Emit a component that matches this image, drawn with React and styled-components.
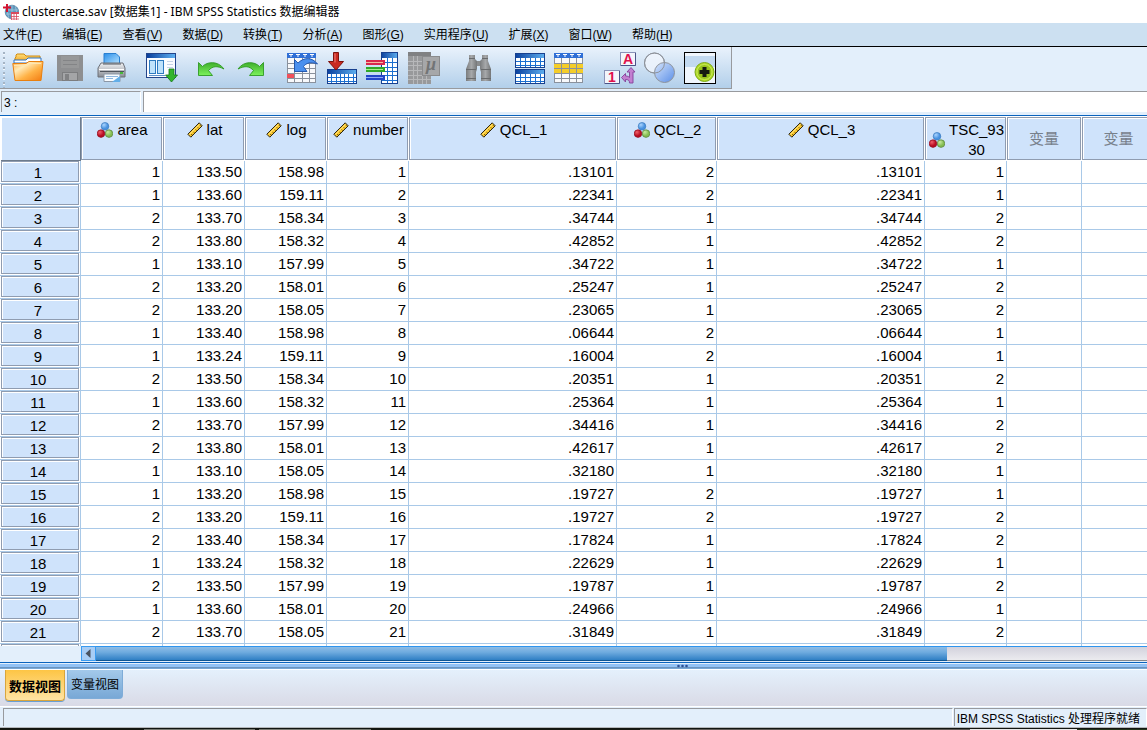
import React from "react";
import styled, { createGlobalStyle, css } from "styled-components";

const SANS = `"Liberation Sans", "Noto Sans CJK SC", sans-serif`;
const C = {
  pale: "#e3effb",
  menu: "#cce0f1",
  head: "#cfe3fb",
  edge: "#8f9cb0",
  grid: "#a9c9e8",
  grey: "#989a9e",
};

const Global = createGlobalStyle`
  *, *::before, *::after { box-sizing: border-box; }
  body { margin: 0; background: ${C.pale}; font-family: ${SANS}; font-size: 12px; color: #000; }
  button, input { font: inherit; color: inherit; margin: 0; border-radius: 0; }
`;

const Window = styled.div`
  display: flex;
  flex-direction: column;
  height: 100vh;
  overflow: hidden;
`;

const TitleBar = styled.header`
  display: flex;
  align-items: center;
  flex: none;
  height: 23px;
  padding-left: 3px;
  gap: 3px;
  background: #fff;
`;

const Title = styled.h1`
  margin: 0;
  font: 400 12px/20px "Noto Sans", "Noto Sans CJK SC", sans-serif;
  white-space: nowrap;
`;

const MenuBar = styled.nav`
  display: flex;
  flex: none;
  gap: 20px;
  height: 24px;
  padding: 1px 3px 0;
  background: ${C.menu};
  border-bottom: 1px solid #000;
`;

const MenuItem = styled.button`
  padding: 0;
  border: 0;
  background: none;
  line-height: 22px;
  white-space: nowrap;
`;

const ToolBand = styled.div`
  display: flex;
  flex: none;
  height: 44px;
`;

const Toolbar = styled.div`
  display: flex;
  height: 42px;
  padding: 5px 14px 0 3px;
  background: linear-gradient(#e9f2fc, #b2cfea);
  border-right: 1px solid ${C.grey};
  border-bottom: 1px solid ${C.grey};
`;

const Grip = styled.span`
  width: 2px;
  height: 36px;
  margin-right: 7px;
  background: repeating-linear-gradient(#a5b4c4 0 2px, #f4f9ff 2px 3px, transparent 3px 5px);
`;

const ToolGroup = styled.div`
  display: flex;
  gap: ${(p) => p.$gap || 8}px;
  margin-left: ${(p) => p.$lead || 0}px;
`;

const ToolButton = styled.button`
  width: 32px;
  height: 32px;
  padding: 0;
  border: 0;
  background: none;
  svg { display: block; overflow: visible; }
`;

const EntryBar = styled.div`
  display: flex;
  flex: none;
  gap: 2px;
  height: 25px;
  padding: 0 0 3px 1px;
  border-bottom: 1px solid #0a63bd;
`;

const CellName = styled.input`
  width: 140px;
  padding: 2px 2px 0;
  border: 0;
  border-left: 1px solid ${C.grey};
  border-top: 1px solid ${C.grey};
  border-right: 1px solid #fff;
  background: #e1effc;
`;

const CellValue = styled.input`
  flex: 1;
  min-width: 0;
  border: 0;
  border-left: 1px solid ${C.grey};
  border-top: 1px solid ${C.grey};
  background: #fff;
`;

const Sheet = styled.main`
  flex: 1;
  min-height: 0;
  overflow: hidden;
  background: #fff;
`;

const Table = styled.table`
  table-layout: fixed;
  width: 100%;
  min-width: 1156px;
  border-spacing: 0;
  font-size: 15px;
  th, td { padding: 0; font-weight: 400; }
`;

const raised = css`
  background: ${C.head};
  border: 1px solid ${C.edge};
  box-shadow: inset 1px 1px #fff;
`;

const HeadBox = styled.div`
  ${raised}
  display: flex;
  justify-content: center;
  align-items: ${(p) => (p.$empty ? "center" : "flex-start")};
  height: 43px;
  margin: 1px 1px 1px 0;
  padding: ${(p) => (p.$empty ? "0" : "2px 0 0 2px")};
  color: ${(p) => (p.$empty ? "#77808b" : "#000")};
  line-height: 20px;
  overflow: hidden;
`;

const CornerBox = styled.div`
  height: 44px;
  margin: 1px 0 0 1px;
  background: ${C.head};
  border-right: 1px solid #6d7b8c;
  border-bottom: 1px solid #6d7b8c;
  box-shadow: inset 1px 1px #fff;
`;

const HeadLabel = styled.span`
  display: flex;
  align-items: center;
  gap: 4px;
  svg { flex: none; }
`;

const RowBox = styled.div`
  ${raised}
  height: 21px;
  margin: 0 1px 1px;
  padding-right: 4px;
  line-height: 21px;
  text-align: center;
`;

const RowHead = styled.th`
  border-right: 1px solid ${C.grid};
  border-bottom: 1px solid ${C.grid};
`;

const Cell = styled.td`
  height: 23px;
  border-right: 1px solid ${C.grid};
  border-bottom: 1px solid ${C.grid};
  && { padding-right: 2px; }
  line-height: 20px;
  text-align: right;
`;

const ScrollRow = styled.div`
  display: flex;
  flex: none;
  height: 17px;
  padding: 0 0 1px 81px;
  border-bottom: 1px solid #0a63bd;
`;

const ScrollButton = styled.button`
  flex: none;
  width: 15px;
  padding: 0 0 0 3px;
  border: 1px solid #3a9bf0;
  background: #a8cdf5;
  svg { display: block; }
`;

const ScrollTrack = styled.div`
  flex: 1;
  border-top: 1px solid #2f95ee;
  border-bottom: 1px solid #86898f;
  background: linear-gradient(#d3d2dd, #ebebef);
`;

const ScrollThumb = styled.div`
  width: 81%;
  height: 14px;
  border-bottom: 1px solid #0f5592;
  background: linear-gradient(#8ebde6, #6fabdf 40%, #2f7fc4);
`;

const Splitter = styled.div`
  flex: none;
  height: 7px;
  padding-left: 59%;
  background: linear-gradient(#e3effb 0 1px, #92c2f5 1px 4px, #6b93bd 4px 5px, #78a9d8 5px 6px, #fff 6px);
  svg { display: block; }
`;

const TabBar = styled.div`
  display: flex;
  flex: none;
  align-items: flex-start;
  gap: 2px;
  height: 36px;
  padding-left: 5px;
  background: linear-gradient(#e4f0fc, #d9dae6);
`;

const Tab = styled.button`
  height: ${(p) => (p.$active ? 31 : 29)}px;
  padding: ${(p) => (p.$active ? "0 3px" : "0 3px 2px")};
  border: 1px solid ${(p) => (p.$active ? "#d9a53c" : "#7eacd8")};
  border-top-width: 0;
  border-radius: 0 0 4px 4px;
  background: ${(p) => (p.$active ? "linear-gradient(#fdc545, #ffe3a3)" : "linear-gradient(#a3c9ea, #78a8d6)")};
  box-shadow: ${(p) => (p.$active ? "0 1px #6b9fd3" : "none")};
  font-size: ${(p) => (p.$active ? 13 : 12)}px;
  font-weight: ${(p) => (p.$active ? 700 : 400)};
  white-space: nowrap;
`;

const StatusBar = styled.footer`
  display: flex;
  flex: none;
  gap: 1px;
  height: 22px;
  padding: 1px 0 1px 3px;
  border-top: 1px solid #fff;
  border-bottom: 1px solid #b4b7ba;
`;

const StatusPane = styled.div`
  flex: ${(p) => (p.$grow ? 1 : "none")};
  padding: 0 6px 0 2px;
  border-left: 1px solid ${C.grey};
  border-top: 1px solid ${C.grey};
  border-right: 1px solid #fff;
  line-height: 20px;
  white-space: nowrap;
`;

const Desktop = styled.div`
  flex: none;
  height: 2px;
  border-top: 1px solid #101410;
  background: linear-gradient(90deg, #15170f 0 144px, #77786f 144px 255px, #15170f 255px 259px, #77786f 259px 371px, #15170f 371px 640px, #5d5752 640px 970px, #e8e8e8 970px 1077px, #23341a 1077px);
`;

/* ---------- drawings ---------- */

const lines = (x, y, w, h, cols, rows, color, sw = 1) => {
  let d = "";
  for (let i = 1; i < cols; i++) d += `M${Math.round(x + (w * i) / cols) + 0.5} ${y}v${h}`;
  for (let i = 1; i < rows; i++) d += `M${x} ${Math.round(y + (h * i) / rows) + 0.5}h${w}`;
  return <path d={d} stroke={color} strokeWidth={sw} fill="none" />;
};

const Svg = ({ size = 32, children }) => (
  <svg width={size} height={size} viewBox={`0 0 ${size} ${size}`} aria-hidden="true">{children}</svg>
);

const DefsSvg = styled.svg`
  display: block;
  flex: none;
`;

const Defs = () => (
  <DefsSvg width="0" height="0" aria-hidden="true">
    <defs>
      <linearGradient id="orange" x1="0" y1="0" x2="1" y2="1"><stop offset="0" stopColor="#ffb04a" /><stop offset=".3" stopColor="#ffeab8" /><stop offset=".6" stopColor="#ffb347" /><stop offset="1" stopColor="#f27a10" /></linearGradient>
      <linearGradient id="amber" x1="0" y1="0" x2="0" y2="1"><stop offset="0" stopColor="#ffe07a" /><stop offset="1" stopColor="#f0a020" /></linearGradient>
      <linearGradient id="blueHead"><stop offset="0" stopColor="#0a3f9c" /><stop offset="1" stopColor="#5fb0f0" /></linearGradient>
      <linearGradient id="sky" x1="0" y1="0" x2="1" y2="1"><stop offset="0" stopColor="#2a8fea" /><stop offset="1" stopColor="#b5e2ff" /></linearGradient>
      <linearGradient id="grass" x1="0" y1="0" x2="0" y2="1"><stop offset="0" stopColor="#3fae2c" /><stop offset="1" stopColor="#7cf25c" /></linearGradient>
      <linearGradient id="metal" x1="0" y1="0" x2="0" y2="1"><stop offset="0" stopColor="#f2f3f5" /><stop offset="1" stopColor="#888c94" /></linearGradient>
      <linearGradient id="lens" x1="0" y1="0" x2="1" y2="1"><stop offset="0" stopColor="#d5e4fb" /><stop offset="1" stopColor="#5b8fe8" /></linearGradient>
      <linearGradient id="barrel"><stop offset="0" stopColor="#7a7c7e" /><stop offset=".5" stopColor="#a6a8aa" /><stop offset="1" stopColor="#747678" /></linearGradient>
      <radialGradient id="rBlue" cx=".35" cy=".3"><stop offset="0" stopColor="#a9d4ff" /><stop offset="1" stopColor="#4a93e0" /></radialGradient>
      <radialGradient id="rRed" cx=".35" cy=".3"><stop offset="0" stopColor="#f0606a" /><stop offset="1" stopColor="#b80d22" /></radialGradient>
      <radialGradient id="rGreen" cx=".35" cy=".3"><stop offset="0" stopColor="#c8eaa0" /><stop offset="1" stopColor="#84bd52" /></radialGradient>
    </defs>
  </DefsSvg>
);

const Nominal = () => (
  <Svg size={16}>
    <circle cx="8" cy="4.300" r="3.800" fill="url(#rBlue)" stroke="#3878bd" strokeWidth=".7" />
    <circle cx="12" cy="11.600" r="3.800" fill="url(#rGreen)" stroke="#55803a" strokeWidth=".7" />
    <circle cx="4" cy="11.600" r="3.800" fill="url(#rRed)" stroke="#8f0c1c" strokeWidth=".7" />
  </Svg>
);

const Scale = () => (
  <Svg size={16}>
    <path d="M.8 12.200 12.200.8 15.200 3.800 3.800 15.200Z" fill="#fbc92e" stroke="#2b2410" strokeWidth="1" />
    <path d="M4.200 12l1 1M6.400 9.800l1 1M8.600 7.600l1 1M10.800 5.400l1 1M13 3.200l1 1" stroke="#5a4608" strokeWidth=".9" />
    <path d="M2.400 12.400 12.200 2.600" stroke="#ffeb9a" strokeWidth=".8" />
  </Svg>
);

const AppIcon = () => (
  <Svg size={16}>
    <circle cx="9" cy="8" r="6.800" fill="#5f97bd" stroke="#3f6f94" strokeWidth=".6" />
    <path d="M3 6h12M3 10h12M9 1.200v13.600M5.500 2.500q-2 5.500 0 11M12.500 2.500q2 5.500 0 11" stroke="#b9d7e8" strokeWidth=".6" fill="none" />
    <path d="M4 0v8M0 3.500h8" stroke="#d3122e" strokeWidth="2" />
    <rect x="8" y="8" width="8" height="8" fill="#fff" />
    <rect x="8" y="8" width="8" height="2" fill="#d84a5e" />
    <path d="M8.500 10v6M11 10v6M13.500 10v6M8 12.500h8M8 15h8" stroke="#d84a5e" strokeWidth=".8" />
  </Svg>
);

const Folder = () => (
  <Svg>
    <path d="M3 10V6l1-1V3l1-1h7l2 2h14v6Z" fill="url(#amber)" stroke="#d08a10" />
    <path d="M2 11V8h12l2-2h13v5Z" fill="#fff" stroke="#2f74c4" />
    <path d="M.8 11.500H14L17 9.500H31L29 28.500H3Z" fill="url(#orange)" stroke="#e8800f" />
    <path d="M2 13.500h13l3-2h11" stroke="#ffe6b0" fill="none" />
  </Svg>
);

const Save = () => (
  <Svg>
    <rect x="4" y="3" width="26" height="26" fill="#8e8f91" />
    <rect x="8" y="4" width="18" height="12" fill="#979899" />
    <path d="M10 8.500h14M10 12.500h14" stroke="#838486" />
    <rect x="9.500" y="20.500" width="15" height="8" fill="#a4a5a7" stroke="#7c7d7f" />
    <rect x="12" y="22" width="4" height="7" fill="#808183" />
  </Svg>
);

const Printer = () => (
  <Svg>
    <path d="M10 1.500H22L25.500 5V12H10Z" fill="url(#sky)" stroke="#2a7fd0" />
    <path d="M7 11h22l2 5v9H4v-9Z" fill="url(#metal)" stroke="#6c7078" />
    <path d="M9 12h18M6 19.500h24" stroke="#4f545c" />
    <path d="M5 17.500h25" stroke="#fff" />
    <rect x="26" y="20" width="3" height="2" fill="#48b83c" />
    <path d="M10 22H26V29.500H10Z" fill="#f7fbff" stroke="#8b97a6" />
    <path d="M12 24.500h12M12 26.500h7" stroke="#8fb6dd" />
    <path d="M26 24l-8 6h8Z" fill="#62aee8" />
  </Svg>
);

const DialogRecall = () => (
  <Svg>
    <rect x="1.500" y="1.500" width="29" height="24" fill="#fbfcff" stroke="#23448a" />
    <rect x="2" y="2" width="28" height="4" fill="url(#blueHead)" />
    <rect x="4.500" y="8.500" width="6" height="13" fill="#bfe2fb" stroke="#2d7ac0" />
    <rect x="12.500" y="8.500" width="6" height="13" fill="#bfe2fb" stroke="#2d7ac0" />
    <path d="M4 23.500h16" stroke="#5a8fc8" />
    <path d="M22 9.500h6M22 12.500h6M22 15.500h6" stroke="#c5d3e6" />
    <path d="M24 17h5v6h3.500L26.500 30 20.500 23H24Z" fill="#33b52c" stroke="#14791a" strokeWidth=".8" />
  </Svg>
);

const undoPath = "M2.500 10.500 6.500 14.500C11 9.500 22 8.500 28 17 21 13.500 16.500 14 12.500 18.500L16.500 23.500H2.500Z";
const Undo = () => (
  <Svg><path d={undoPath} fill="url(#grass)" stroke="#2f9a24" strokeWidth=".9" /></Svg>
);
const Redo = () => (
  <Svg><g transform="translate(30 0) scale(-1 1)"><path d={undoPath} fill="url(#grass)" stroke="#2f9a24" strokeWidth=".9" /></g></Svg>
);

const SheetGrid = ({ children }) => (
  <g>
    <rect x=".5" y="1.500" width="28" height="29" fill="#f8f9fb" stroke="#8a919c" />
    {children}
    {lines(0, 6, 29, 25, 4, 5, "#8a919c")}
    <rect x="0" y="1" width="29" height="5" fill="#2f6fd6" />
    <path d="M2 2.500h4M4 2v3M9 2.500h4M11 2v3M16 2.500h4M18 2v3M23 2.500h4M25 2v3" stroke="#fff" />
  </g>
);

const GoToCase = () => (
  <Svg>
    <SheetGrid><rect x="0" y="21" width="7" height="5" fill="#f0505a" /></SheetGrid>
    <path d="M7.500 7.500 11 11C17 5 25 5 30.500 12 24 9.500 19 11 16.500 14.500L20 19.500H7.500Z" fill="#4a90ee" stroke="#1a4fa8" strokeWidth=".9" />
  </Svg>
);

const BlueTable = ({ x, y, w, h, head, cols, rows }) => (
  <g>
    <rect x={x} y={y} width={w} height={h} fill="#fff" />
    {lines(x, y + head, w, h - head, cols, rows, "#1c6fd0")}
    <rect x={x} y={y} width={w} height={head} fill="url(#blueHead)" />
    <rect x={x + 0.5} y={y + 0.5} width={w - 1} height={h - 1} fill="none" stroke="#17408f" />
  </g>
);

const GoToVariable = () => (
  <Svg>
    <BlueTable x={0} y={17} w={30} h={15} head={5} cols={7} rows={3} />
    <path d="M6.500.5h5v9h5L9 18 1.500 9.500h5Z" fill="#c92a20" stroke="#7e120c" />
    <path d="M8 1.500v9" stroke="#f08078" />
  </Svg>
);

const Variables = () => (
  <Svg>
    <BlueTable x={14} y={0} w={17} h={32} head={6} cols={3} rows={6} />
    {[["#d8284c", "#f5b8a0", 8], ["#30a828", "#a4f08c", 15], ["#2346c8", "#90a8f8", 23]].map(([a, b, y]) => (
      <g key={y}>
        <rect x="-1" y={y} width="19" height="5" fill={a} />
        <path d={`M-1 ${y + 2.5}h17`} stroke={b} />
      </g>
    ))}
  </Svg>
);

const Mu = styled.text`
  font: italic 700 18px "Liberation Serif", serif;
  fill: #727476;
`;

const Statistics = () => (
  <Svg>
    <rect x="1" y="0" width="23" height="32" fill="#98999b" />
    <rect x="1" y="0" width="23" height="4" fill="#808183" />
    {lines(1, 4, 23, 28, 5, 6, "#b7b8ba")}
    <rect x="15.500" y="4.500" width="17" height="19" fill="#a6a7a9" stroke="#8a8b8d" />
    <Mu x="19" y="18">μ</Mu>
  </Svg>
);

const Find = () => (
  <Svg>
    <rect x="12" y="9" width="8" height="5" fill="#8a8c8e" />
    <path d="M6 3h6v4l2 2v8l-1 3v9H3V17l3-8Z" fill="url(#barrel)" />
    <path d="M19 3h6v6l3 8v12H18v-9l-1-3V9l2-2Z" fill="url(#barrel)" />
    <path d="M6 6.500h6M19 6.500h6M3 17.500h10M18 17.500h10M3 26.500h10M18 26.500h10" stroke="#696b6d" />
  </Svg>
);

const SplitFile = () => (
  <Svg>
    <BlueTable x={1} y={1} w={30} h={15} head={5} cols={6} rows={3} />
    <BlueTable x={1} y={17} w={30} h={15} head={5} cols={6} rows={3} />
  </Svg>
);

const SelectCases = () => (
  <Svg><SheetGrid><rect x="0" y="11" width="29" height="10" fill="#f5cd28" /></SheetGrid></Svg>
);

const Glyph = styled.text`
  font: 700 14px "Liberation Sans", sans-serif;
  fill: #e0104c;
  text-anchor: middle;
`;

const ValueLabels = () => (
  <Svg>
    <rect x="15.500" y=".5" width="15" height="13" fill="#f4f5fb" stroke="#8a93b8" />
    <path d="M16 13.500h14.500V1" stroke="#4b5488" fill="none" />
    <Glyph x="23" y="12">A</Glyph>
    <rect x="-.5" y="18.500" width="15" height="13" fill="#f4f5fb" stroke="#8a93b8" />
    <path d="M0 31.500h14.500V19" stroke="#4b5488" fill="none" />
    <Glyph x="7" y="30">1</Glyph>
    <path d="M26 15.500 30 20H28V31H24.500C24.500 28.500 23.500 27.500 20.500 27.500V30L16.500 25.500 20.500 21.500V24C22.500 24 23.500 24.500 24.500 25.500V20H22Z" fill="#c27fd0" stroke="#83429a" strokeWidth=".9" />
  </Svg>
);

const VariableSets = () => (
  <Svg>
    <circle cx="9.500" cy="11" r="10" fill="#f0f5fd" fillOpacity=".8" stroke="#8e939b" />
    <circle cx="19.500" cy="20.500" r="10" fill="url(#lens)" stroke="#8e939b" />
    <circle cx="9.500" cy="11" r="10" fill="none" stroke="#8e939b" />
  </Svg>
);

const Customize = () => (
  <Svg>
    <rect x="-.5" y=".5" width="31" height="31" fill="#f0f6fd" stroke="#000" />
    <rect x="0" y="4" width="30" height="11" fill="#c2d9f0" />
    <circle cx="19.500" cy="20" r="9.500" fill="#b2dc28" stroke="#7ba818" />
    <circle cx="19.500" cy="20" r="7.500" fill="#98c41c" stroke="#c8ea58" />
    <path d="M17.500 15h4v3h3v4h-3v3h-4v-3h-3v-4h3Z" fill="#151b10" />
  </Svg>
);

/* ---------- data ---------- */

const MENUS = [["文件", "F"], ["编辑", "E"], ["查看", "V"], ["数据", "D"], ["转换", "T"], ["分析", "A"], ["图形", "G"], ["实用程序", "U"], ["扩展", "X"], ["窗口", "W"], ["帮助", "H"]];

const TOOLS = [
  { gap: 9, items: [["打开", Folder], ["保存", Save], ["打印", Printer]] },
  { lead: 19, items: [["重新调用对话框", DialogRecall]] },
  { lead: 19, items: [["撤销", Undo], ["恢复", Redo]] },
  { lead: 19, items: [["转到个案", GoToCase], ["转到变量", GoToVariable], ["变量", Variables], ["描述统计", Statistics]] },
  { lead: 24, items: [["查找", Find]] },
  { lead: 19, items: [["拆分文件", SplitFile], ["选择个案", SelectCases]] },
  { lead: 19, items: [["值标签", ValueLabels], ["使用变量集", VariableSets], ["定制工具栏", Customize]] },
];

const COLUMNS = [
  ["area", 82, Nominal], ["lat", 82, Scale], ["log", 82, Scale], ["number", 82, Scale],
  ["QCL_1", 208, Scale], ["QCL_2", 100, Nominal], ["QCL_3", 208, Scale], ["TSC_9330", 82, Nominal],
];

const LAT = ["133.50", "133.60", "133.70", "133.80", "133.10", "133.20", "133.20", "133.40", "133.24"];
const LOG = ["158.98", "159.11", "158.34", "158.32", "157.99", "158.01", "158.05"];
const CASES = [
  [1, ".13101", 2], [1, ".22341", 2], [2, ".34744", 1], [2, ".42852", 1], [1, ".34722", 1], [2, ".25247", 1], [2, ".23065", 1],
  [1, ".06644", 2], [1, ".16004", 2], [2, ".20351", 1], [1, ".25364", 1], [2, ".34416", 1], [2, ".42617", 1], [1, ".32180", 1],
  [1, ".19727", 2], [2, ".19727", 2], [2, ".17824", 1], [1, ".22629", 1], [2, ".19787", 1], [1, ".24966", 1], [2, ".31849", 1],
];
const ROWS = CASES.map(([area, dist, cluster], i) => [area, LAT[i % 9], LOG[i % 7], i + 1, dist, cluster, dist, area, "", ""]);

const label = (name) => (name === "TSC_9330" ? <>TSC_93<br />30</> : name);

export default function App() {
  return (
    <Window>
      <Global />
      <Defs />
      <TitleBar>
        <AppIcon />
        <Title>clustercase.sav [数据集1] - IBM SPSS Statistics 数据编辑器</Title>
      </TitleBar>
      <MenuBar>
        {MENUS.map(([name, key]) => (
          <MenuItem key={key}>{name}(<u>{key}</u>)</MenuItem>
        ))}
      </MenuBar>
      <ToolBand>
        <Toolbar role="toolbar">
          <Grip />
          {TOOLS.map((g, i) => (
            <ToolGroup key={i} $gap={g.gap} $lead={g.lead}>
              {g.items.map(([name, Icon]) => (
                <ToolButton key={name} aria-label={name}><Icon /></ToolButton>
              ))}
            </ToolGroup>
          ))}
        </Toolbar>
      </ToolBand>
      <EntryBar>
        <CellName aria-label="单元格" defaultValue="3 :" />
        <CellValue aria-label="值" />
      </EntryBar>
      <Sheet>
        <Table>
          <colgroup>
            <col width="81" />
            {COLUMNS.map(([name, w]) => <col key={name} width={w} />)}
            <col width="75" />
            <col />
          </colgroup>
          <thead>
            <tr>
              <td><CornerBox /></td>
              {COLUMNS.map(([name, , Icon]) => (
                <th key={name} scope="col">
                  <HeadBox><HeadLabel><Icon /><span>{label(name)}</span></HeadLabel></HeadBox>
                </th>
              ))}
              <th scope="col"><HeadBox $empty>变量</HeadBox></th>
              <th scope="col"><HeadBox $empty>变量</HeadBox></th>
            </tr>
          </thead>
          <tbody>
            {ROWS.map((r, i) => (
              <tr key={i}>
                <RowHead scope="row"><RowBox>{i + 1}</RowBox></RowHead>
                {r.map((v, j) => <Cell key={j}>{v}</Cell>)}
              </tr>
            ))}
            <tr>
              <RowHead><RowBox /></RowHead>
              {ROWS[0].map((_, j) => <Cell key={j} />)}
            </tr>
          </tbody>
        </Table>
      </Sheet>
      <ScrollRow>
        <ScrollButton aria-label="向左滚动">
          <svg width="6" height="9" viewBox="0 0 6 9" aria-hidden="true"><path d="M5.500 0v9L.5 4.500Z" fill="#4a5360" /></svg>
        </ScrollButton>
        <ScrollTrack><ScrollThumb /></ScrollTrack>
      </ScrollRow>
      <Splitter>
        <svg width="12" height="5" viewBox="0 0 12 5" aria-hidden="true">
          <circle cx="1.500" cy="3" r="1.300" fill="#2c4f94" /><circle cx="5.500" cy="3" r="1.300" fill="#2c4f94" /><circle cx="9.500" cy="3" r="1.300" fill="#2c4f94" />
        </svg>
      </Splitter>
      <TabBar role="tablist">
        <Tab role="tab" aria-selected="true" $active>数据视图</Tab>
        <Tab role="tab" aria-selected="false">变量视图</Tab>
      </TabBar>
      <StatusBar>
        <StatusPane $grow />
        <StatusPane>IBM SPSS Statistics 处理程序就绪</StatusPane>
      </StatusBar>
      <Desktop />
    </Window>
  );
}
